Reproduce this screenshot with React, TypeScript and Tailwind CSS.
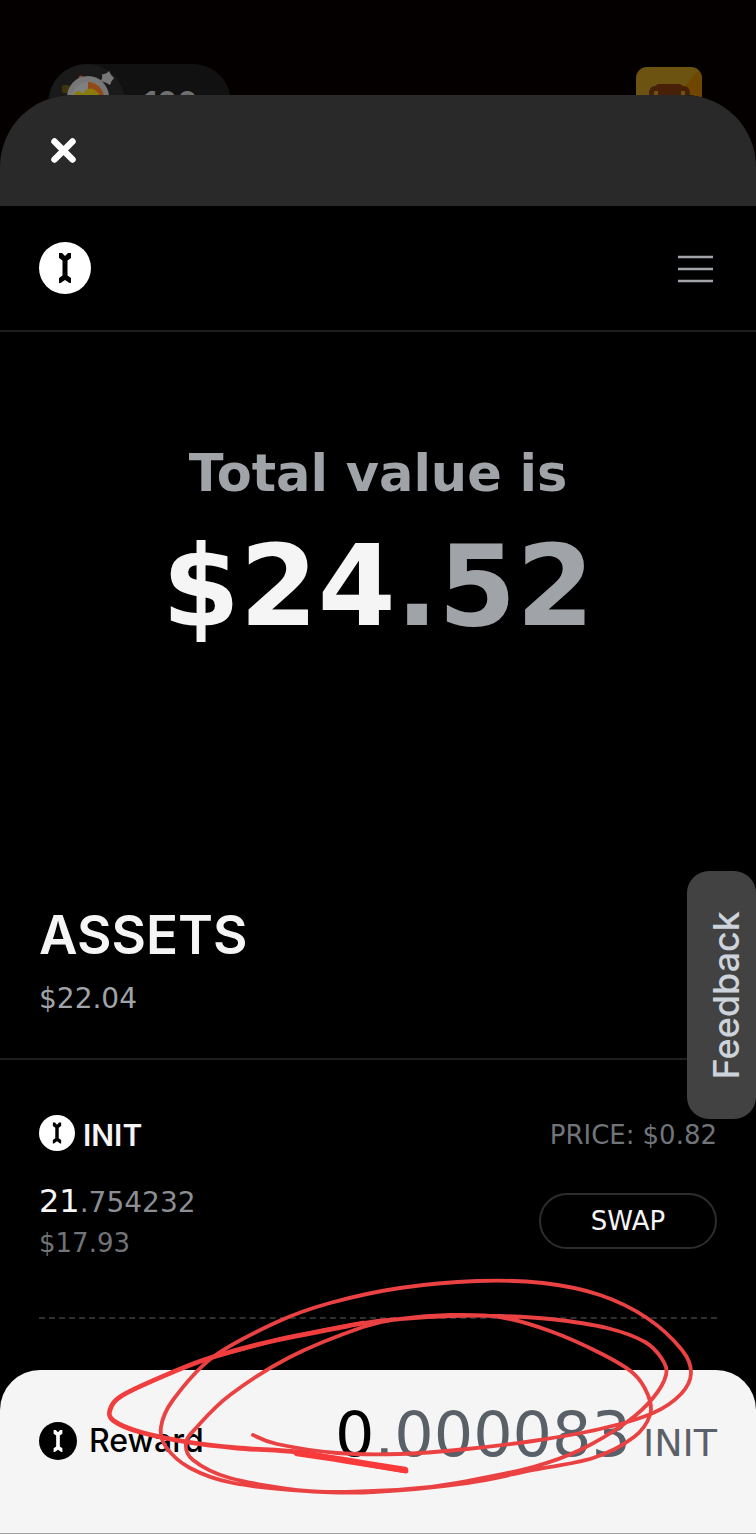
import React from 'react';
import { clsx } from 'clsx';

type Point = [number, number];

// Pen stroke around the reward amount, drawn in one go
const LOOPS: Point[] = [
  [253, 1435], [277, 1444], [337, 1453], [400, 1454], [467, 1449], [533, 1441], [600, 1429],
  [653, 1413], [681, 1394], [691, 1373], [682, 1350], [647, 1318], [600, 1295], [543, 1283],
  [477, 1281], [400, 1288], [330, 1303], [277, 1322], [213, 1357], [173, 1400], [161, 1427],
  [166, 1447], [190, 1468], [233, 1483], [307, 1491], [373, 1492], [467, 1483], [533, 1470],
  [593, 1458], [634, 1437], [650, 1415], [648, 1395], [633, 1373], [600, 1353], [550, 1331],
  [500, 1317], [450, 1315], [400, 1319], [363, 1327], [290, 1357], [230, 1395], [197, 1427],
  [186, 1443], [193, 1460], [230, 1478], [307, 1491], [373, 1491], [420, 1488], [467, 1481],
  [533, 1467], [580, 1450], [627, 1422], [653, 1398], [666, 1375], [662, 1359], [645, 1342],
  [607, 1328], [550, 1319], [500, 1316], [450, 1316], [400, 1319], [363, 1323], [277, 1340],
  [213, 1357],
];

const TAIL: Point[] = [
  [363, 1323], [277, 1340], [213, 1357], [173, 1372], [123, 1395], [110, 1410], [114, 1421],
  [140, 1432], [187, 1442], [237, 1448], [297, 1452], [343, 1460], [406, 1471],
];

const TIP: Point[] = [[297, 1453], [343, 1460], [405, 1470]];

function smoothPath(points: Point[]) {
  let d = `M${points[0][0]} ${points[0][1]}`;
  for (let i = 0; i < points.length - 1; i++) {
    const p0 = points[Math.max(i - 1, 0)];
    const p1 = points[i];
    const p2 = points[i + 1];
    const p3 = points[Math.min(i + 2, points.length - 1)];
    d += `C${p1[0] + (p2[0] - p0[0]) / 6} ${p1[1] + (p2[1] - p0[1]) / 6} ${p2[0] - (p3[0] - p1[0]) / 6} ${p2[1] - (p3[1] - p1[1]) / 6} ${p2[0]} ${p2[1]}`;
  }
  return d;
}

function PenMarks() {
  return (
    <svg
      viewBox="0 1260 756 274"
      fill="none"
      strokeLinecap="round"
      strokeLinejoin="round"
      className="pointer-events-none absolute bottom-0 left-0 w-full"
      aria-hidden="true"
    >
      <path d={smoothPath(LOOPS)} stroke="#ea4142" strokeWidth="3.8" />
      <path d={smoothPath(TAIL)} stroke="#f03d3e" strokeWidth="4.8" />
      <path d={smoothPath(TIP)} stroke="#f93a3a" strokeWidth="6.4" />
    </svg>
  );
}

interface InitLogoProps {
  className: string;
  inverted?: boolean;
}

function InitLogo({ className, inverted = false }: InitLogoProps) {
  return (
    <svg viewBox="0 0 52 52" className={clsx('shrink-0', className)} aria-hidden="true">
      <circle cx="26" cy="26" r="26" fill={inverted ? '#000' : '#fff'} />
      <path
        d="M20 11h3l3 3 3-3h3v5l-3.500 2.500v15L32 36v5h-1.500L26 38l-4.500 3H20v-5l3.500-2.500v-15L20 16z"
        fill={inverted ? '#fff' : '#000'}
      />
    </svg>
  );
}

function Backdrop() {
  return (
    <div className="flex h-[167px] items-start justify-between pt-16 pr-[54px] pl-12">
      <div className="flex h-[76px] w-[183px] items-center rounded-full bg-[#111111]">
        <svg viewBox="0 0 78 76" className="h-[76px] w-[78px]" aria-hidden="true">
          <circle cx="39" cy="38" r="38" fill="#1a1a1a" />
          <rect x="14" y="21" width="8" height="8" rx="2" fill="#3f350f" />
          <circle cx="33" cy="14" r="2.5" fill="#8b432b" />
          <circle cx="40" cy="33" r="21" fill="#777777" />
          <circle cx="40" cy="34" r="16" fill="#808080" />
          <path d="M40 18a16 16 0 0 1 16 16H40z" fill="#924916" />
          <path d="M25 35c1-9 7-10 10-5 3-8 14-8 18 5z" fill="#8b7a0c" />
          <path d="M61 7Q63 12 66 14Q63 17 62 21Q58 18 52 17Q55 15 54 10Q58 11 61 7z" fill="#777777" />
        </svg>
        <span className="pl-[18px] text-[30px] font-bold text-[#707070]">100</span>
      </div>
      <svg viewBox="0 0 66 66" className="mt-[3px] h-[66px] w-[66px]" aria-hidden="true">
        <rect width="66" height="66" rx="11" fill="#6d5312" />
        <path d="M62 4a11 11 0 0 1 4 8v54H8z" fill="#6f4600" />
        <path d="M22 17h22l3 2q7 0 7 8v12H13V27q0-8 6-8z" fill="#482008" />
        <path d="M18 24h4v5h-4zM45 24h4v5h-4z" fill="#6d5312" />
      </svg>
    </div>
  );
}

function AssetRow() {
  return (
    <div className="mx-[39px] flex justify-between border-b-2 border-dashed border-[#2e2f30] pt-[55px] pb-[58px] font-['DejaVu_Sans',sans-serif]">
      <div>
        <div className="flex h-9 items-end gap-2">
          <InitLogo className="h-9 w-9" />
          <span className="font-['Inter',sans-serif] text-[30px] leading-8 font-semibold text-[#f5f5f5]">INIT</span>
        </div>
        <p className="mt-8 text-[28px] leading-9 text-[#8b8e92]">
          <span className="text-[32px] text-[#f5f5f5]">21</span>.754232
        </p>
        <p className="mt-1.5 text-[26px] leading-8 text-[#717477]">$17.93</p>
      </div>
      <div className="flex flex-col items-end">
        <p className="flex h-9 items-end gap-2 text-[26px] leading-8 text-[#717579]">
          <span>PRICE:</span>
          <span>$0.82</span>
        </p>
        <button
          type="button"
          className="mt-[42px] h-14 w-[178px] rounded-full border-2 border-[#2d2d2d] text-[26px] text-[#f5f5f5]"
        >
          SWAP
        </button>
      </div>
    </div>
  );
}

export default function App() {
  return (
    <div className="relative flex min-h-screen flex-col overflow-hidden bg-[#050000] font-['Inter','Liberation_Sans',sans-serif]">
      <Backdrop />

      <main className="relative -mt-[72px] flex flex-1 flex-col overflow-hidden rounded-t-[72px] bg-black">
        <div className="flex h-[111px] items-center bg-[#292929] px-12">
          <button type="button" aria-label="Close">
            <svg viewBox="0 0 32 32" className="h-8 w-8" fill="none" stroke="#fff" strokeWidth="6.5" strokeLinecap="round">
              <path d="M6.500 6.500l18 18M24.500 6.500l-18 18" />
            </svg>
          </button>
        </div>

        <nav className="flex h-[126px] items-center justify-between border-b-2 border-[#1e1e1e] px-[39px]">
          <a href="#" aria-label="Home">
            <InitLogo className="h-[52px] w-[52px]" />
          </a>
          <button type="button" aria-label="Menu">
            <svg viewBox="0 0 40 32" className="h-8 w-10" stroke="#a1a4a8" strokeWidth="2.6">
              <path d="M1 5h35M1 17h35M1 29h35" />
            </svg>
          </button>
        </nav>

        <section className="flex flex-col items-center pt-28 font-['DejaVu_Sans',sans-serif] font-bold text-[#a0a4a8]">
          <h1 className="text-[51px] leading-[60px]">Total value is</h1>
          <p className="mt-[26px] text-[112px] leading-[112px]">
            <span className="text-[#f5f5f5]">$24</span>.52
          </p>
        </section>

        <section className="mt-[265px] border-b-2 border-[#1e1e1e] px-[39px] pb-[43px]">
          <h2 className="text-[53px] leading-[56px] font-semibold text-[#f5f5f5]">ASSETS</h2>
          <p className="mt-5 font-['DejaVu_Sans',sans-serif] text-[28px] leading-8 text-[#a0a4a8]">$22.04</p>
        </section>

        <AssetRow />

        <footer className="mt-auto flex h-[164px] items-start justify-between rounded-t-[40px] border-b border-[#a0a0a0] bg-[#f5f5f5] px-[39px] pt-[35px]">
          <div className="flex h-[72px] items-center gap-3">
            <InitLogo className="h-[38px] w-[38px]" inverted />
            <span className="text-[32px] font-medium text-black">Reward</span>
          </div>
          <p className="flex items-baseline gap-3 font-['DejaVu_Sans',sans-serif] text-[#596068]">
            <span className="text-[62px] leading-[60px]">
              <span className="text-black">0</span>.000083
            </span>
            <span className="text-[38px] leading-10">INIT</span>
          </p>
        </footer>
      </main>

      <button
        type="button"
        className="absolute top-[871px] right-0 flex h-[248px] w-[69px] items-center justify-center rounded-[22px] bg-[#424242] pl-2 text-[36px] font-medium text-[#cdd3da]"
      >
        <span className="rotate-180 [writing-mode:vertical-rl]">Feedback</span>
      </button>

      <PenMarks />
    </div>
  );
}
